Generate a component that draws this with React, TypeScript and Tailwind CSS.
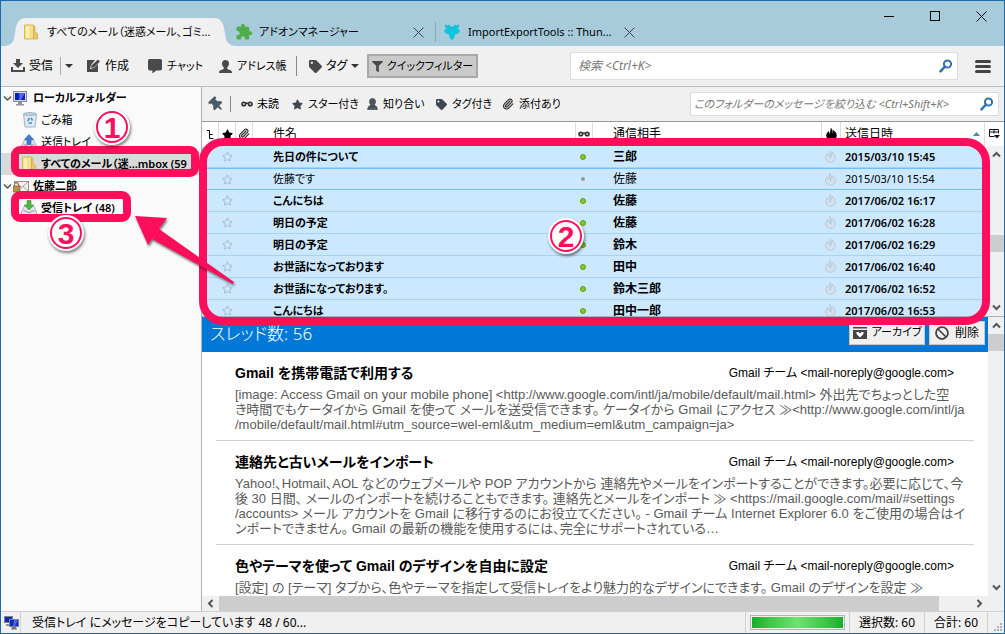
import type { ReactNode } from 'react';
import { Paperclip } from 'lucide-react';
import { FaBan, FaCommentAlt, FaFilter, FaRegStar, FaStar, FaTag, FaThumbtack } from 'react-icons/fa';
import { MdExtension } from 'react-icons/md';

const mails = [
  { subject: '先日の件について', from: '三郎', date: '2015/03/10 15:45', unread: true },
  { subject: '佐藤です', from: '佐藤', date: '2015/03/10 15:54', unread: false },
  { subject: 'こんにちは', from: '佐藤', date: '2017/06/02 16:17', unread: true },
  { subject: '明日の予定', from: '佐藤', date: '2017/06/02 16:28', unread: true },
  { subject: '明日の予定', from: '鈴木', date: '2017/06/02 16:29', unread: true },
  { subject: 'お世話になっております', from: '田中', date: '2017/06/02 16:40', unread: true },
  { subject: 'お世話になっております。', from: '鈴木三郎', date: '2017/06/02 16:52', unread: true },
  { subject: 'こんにちは', from: '田中一郎', date: '2017/06/02 16:53', unread: true },
];

const threads = [
  {
    title: 'Gmail を携帯電話で利用する',
    lines: [
      '[image: Access Gmail on your mobile phone] <http://www.google.com/intl/ja/mobile/default/mail.html> 外出先でちょっとした空',
      'き時間でもケータイから Gmail を使って メールを送受信できます。 ケータイから Gmail にアクセス ≫<http://www.google.com/intl/ja',
      '/mobile/default/mail.html#utm_source=wel-eml&utm_medium=eml&utm_campaign=ja>',
    ],
  },
  {
    title: '連絡先と古いメールをインポート',
    lines: [
      'Yahoo!、Hotmail、AOL などのウェブメールや POP アカウントから 連絡先やメールをインポートすることができます。必要に応じて、今',
      '後 30 日間、 メールのインポートを続けることもできます。 連絡先とメールをインポート ≫ <https://mail.google.com/mail/#settings',
      '/accounts> メール アカウントを Gmail に移行するのにお役立てください。 - Gmail チーム Internet Explorer 6.0 をご使用の場合はイ',
      'ンポートできません。 Gmail の最新の機能を使用するには、完全にサポートされている…',
    ],
  },
  {
    title: '色やテーマを使って Gmail のデザインを自由に設定',
    lines: ['[設定] の [テーマ] タブから、色やテーマを指定して受信トレイをより魅力的なデザインにできます。 Gmail のデザインを設定 ≫'],
  },
];

/* ---------- Iconos ---------- */

const FolderIcon = () => (
  <svg width="16" height="16" viewBox="0 0 16 16" className="shrink-0">
    <path d="M1.500 1h9v14h-9z" fill="#f6e08e" stroke="#d9b85a" />
    <path d="M10.500 1.500l1.500 1v5.500l2.500 1.500v5.500h-4z" fill="#e9c869" stroke="#d0ac4c" strokeWidth=".8" />
    <path d="M3 2.500h3v11h-3z" fill="#fcf0b8" />
  </svg>
);

const DownloadIcon = () => (
  <svg width="14" height="14" viewBox="0 0 14 14" fill="#4a4a4a">
    <path d="M5 0h4v4h3L7 9 2 4h3z" />
    <path d="M0 8h2v3h10V8h2v5H0z" />
  </svg>
);

const WriteIcon = () => (
  <svg width="15" height="14" viewBox="0 0 15 14" fill="#4a4a4a">
    <path d="M1 1h8L5 6 4 10l4-1 4-4v8H1z" />
    <path d="M5 9l.7-2.700L12 .5l2 2-6 6z" />
  </svg>
);

const PersonIcon = () => (
  <svg width="13" height="13" viewBox="0 0 13 13" fill="#4a4a4a">
    <path d="M6.500 0C8.700 0 10 1.500 10 3.500 10 5 9.300 6.500 8.300 7.300V9l3.700 1.500c.7.400 1 1.200 1 2.500H0c0-1.300.3-2.100 1-2.500L4.700 9V7.300C3.700 6.500 3 5 3 3.500 3 1.500 4.300 0 6.500 0z" />
  </svg>
);

/* Silueta con base, para el filtro de contactos */
const ContactIcon = () => (
  <svg width="11" height="12" viewBox="0 0 11 12" fill="#4c5863" stroke="#303a44" strokeWidth=".6">
    <path d="M5.500 .5C7.500 .5 8.500 1.800 8.500 3.500 8.500 4.800 8 5.800 7.500 6.500L8.500 8.500H2.500L3.500 6.500C3 5.800 2.500 4.800 2.500 3.500 2.500 1.800 3.500 .5 5.500 .5z" />
    <path d="M1.500 8.500h8l1 3H.500z" />
  </svg>
);

const SearchIcon = () => (
  <svg width="14" height="14" viewBox="0 0 14 14" fill="none" stroke="#2f72ad" className="shrink-0">
    <circle cx="8.500" cy="5" r="3.600" strokeWidth="2" />
    <path d="M6 7.500L1.500 12.300" strokeWidth="2.500" strokeLinecap="round" />
  </svg>
);

const GlassesIcon = () => (
  <svg width="12" height="6" viewBox="0 0 12 6" fill="#ccc" stroke="#333" strokeWidth="1.600">
    <circle cx="2.800" cy="3" r="1.800" />
    <circle cx="9.200" cy="3" r="1.800" />
    <path d="M4.500 2.500q1.500-1 3 0" />
  </svg>
);

const ClipIcon = ({ className = '' }: { className?: string }) => (
  <Paperclip size={12} strokeWidth={2.5} color="#333" className={className} />
);

const flamePath =
  'M5 .5C6.500 2 6 4 6.200 5.500 7 5 7.500 3.500 7.300 2.500 9.500 4 10.500 6 10.300 8 10 10.700 8 12.300 5.500 12.300S.800 10.700.700 8C.600 6 1.500 4.500 2.500 3.500 2.500 5 3 6 3.800 6.300 4 4.500 5.300 2.500 5 .5z';

const FlameIcon = ({ dark = false }: { dark?: boolean }) => (
  <svg width="11" height="13" viewBox="0 0 11 13" className="mx-auto block">
    <path d={flamePath} fill={dark ? '#000' : '#d3e1ec'} stroke={dark ? '#000' : '#b4c3cf'} strokeWidth=".8" />
    {!dark && <path d="M5.500 5.500v2.500" stroke="#a3b3c1" strokeWidth=".8" />}
  </svg>
);

const ComputerIcon = () => (
  <svg width="14" height="15" viewBox="0 0 14 15">
    <rect x=".5" y=".5" width="13" height="10" fill="#d8dadd" stroke="#858b93" />
    <rect x="2" y="2" width="10" height="7" fill="#0a1fc0" />
    <path d="M6 2h6L8 9H6z" fill="#4a68ee" />
    <path d="M5 11h4v2h2v1.500H3V13h2z" fill="#8e949c" />
  </svg>
);

const TrashIcon = () => (
  <svg width="14" height="16" viewBox="0 0 14 16" className="ml-0.5">
    <path d="M.500 2l1.500 13h10L13.500 2z" fill="#dfe9f1" stroke="#a4b4c2" />
    <ellipse cx="7" cy="2" rx="6.500" ry="1.500" fill="#c3ced8" stroke="#93a3b2" strokeWidth=".7" />
    <path d="M4.700 9l1.800-3M8 6l1.500 2.500M9 11H5.500" stroke="#3f93cf" strokeWidth="1.500" />
  </svg>
);

/* Bandeja con flecha: azul de salida, verde de entrada */
const TrayIcon = ({ out = false }: { out?: boolean }) => (
  <svg width="16" height="16" viewBox="0 0 16 16">
    <path d="M3.500 6h9l3 6v3H.500v-3z" fill="#e4e8ec" stroke="#a5adb5" />
    <path d="M2.500 11h3l1 1.500h3l1-1.500h3" fill="none" stroke="#8b949d" />
    {out ? (
      <path d="M8 .5l4.500 5H10v5H6v-5H3.500z" fill="#3f7bd0" stroke="#2a5ba8" strokeWidth=".6" />
    ) : (
      <path d="M6 .5h4V5h2.700L8 10 3.300 5H6z" fill="#4cb944" stroke="#2f8f2c" strokeWidth=".6" />
    )}
  </svg>
);

const AccountIcon = () => (
  <svg width="16" height="13" viewBox="0 0 16 13">
    <rect x="1.500" y="1.500" width="14" height="10" fill="#f2f2ee" stroke="#8d9296" />
    <path d="M2 2l6.500 5.500L15 2M2 11l5-4.500M15 11l-5-4.500" fill="none" stroke="#9da2a6" />
    <rect x="0" y="6" width="7" height="6" fill="#b4914a" stroke="#806328" strokeWidth=".7" />
    <path d="M1.500 6V4.500a2 2 0 0 1 4 0V6" fill="none" stroke="#8b6d30" />
  </svg>
);

const NetworkIcon = () => (
  <svg width="15" height="14" viewBox="0 0 15 14">
    <rect x=".5" y=".5" width="8" height="6" fill="#1226c8" stroke="#7a828c" />
    <path d="M2 8h4v2H2z" fill="#8d949c" />
    <rect x="5.500" y="3.500" width="9" height="7" fill="#1226c8" stroke="#7a828c" />
    <path d="M10 4h4l-3 6H9z" fill="#4a68ee" />
    <path d="M8 11h4l1 2.500H7z" fill="#6f767e" />
  </svg>
);

const AddonSiteIcon = () => (
  <svg width="16" height="16" viewBox="0 0 16 16" fill="#0fc3de">
    <path d="M1 0l2 1.500L5 .5l1.500 2h3L11 .5l2 1L15 0v3l-1.500 1.500L16 6.500 14.500 9.500l-3 .5L10.500 12v2L8 16l-2.500-2v-2l-1-2-3-.5L0 6.500l2.500-2L1 3z" />
  </svg>
);

const CloseIcon = ({ color = '#444' }: { color?: string }) => (
  <svg width="11" height="11" viewBox="0 0 11 11" stroke={color} fill="none">
    <path d="M.500 .5l10 10M10.500 .5l-10 10" />
  </svg>
);

const Chevron = ({ d, thin = false }: { d: string; thin?: boolean }) => (
  <svg width="9" height="9" viewBox="0 0 9 9" fill="none" stroke="#555" strokeWidth={thin ? 1.5 : 2}>
    <path d={d} />
  </svg>
);

const UP = 'M1 6.500l3.500-3.500 3.500 3.500';
const DOWN = 'M1 2.500l3.500 3.500 3.500-3.500';
const LEFT = 'M6.500 1l-3.500 3.500 3.500 3.500';
const RIGHT = 'M2.500 1l3.500 3.500-3.500 3.500';

const Caret = () => (
  <svg width="8" height="4" viewBox="0 0 8 4" fill="#333">
    <path d="M0 0h8L4 4z" />
  </svg>
);

/* ---------- Barras ---------- */

const TitleBar = () => (
  <header className="flex h-[45px] shrink-0 justify-between bg-[#a8cbdc]">
    <div className="ml-1 flex h-7 items-stretch self-end whitespace-nowrap text-[11px]">
      <div className="flex">
        <svg width="22" height="28" viewBox="0 0 22 28" fill="#f0f0f0">
          <path d="M0 28C8 27 9 22 10 16 11 6 13 0 22 0v28z" />
        </svg>
        <button className="flex w-[186px] items-center gap-2 bg-[#f0f0f0] text-left">
          <span className="-ml-1"><FolderIcon /></span>
          すべてのメール（迷惑メール、ゴミ...
        </button>
        <svg width="22" height="28" viewBox="0 0 22 28" fill="#f0f0f0">
          <path d="M22 28C14 27 13 22 12 16 11 6 9 0 0 0v28z" />
        </svg>
      </div>
      <div className="flex w-[200px] items-center">
        <button className="flex flex-1 items-center gap-1.5">
          <MdExtension size={18} color="#4fae4a" />
          アドオンマネージャー
        </button>
        <button aria-label="タブを閉じる" className="mr-[11px]"><CloseIcon /></button>
      </div>
      <div className="my-1 w-px bg-[#86a5b5]" />
      <div className="flex w-[199px] items-center pl-2">
        <button className="flex flex-1 items-center gap-2">
          <AddonSiteIcon />
          ImportExportTools :: Thun...
        </button>
        <button aria-label="タブを閉じる"><CloseIcon /></button>
      </div>
    </div>
    <div className="flex h-[30px]">
      <button aria-label="最小化" className="grid w-[46px] place-items-center"><span className="h-px w-2.5 bg-black" /></button>
      <button aria-label="最大化" className="grid w-[46px] place-items-center"><span className="size-2.5 border border-black" /></button>
      <button aria-label="閉じる" className="grid w-[46px] place-items-center"><CloseIcon color="#000" /></button>
    </div>
  </header>
);

const SearchBox = ({ label, className }: { label: string; className: string }) => (
  <label className={`flex items-center border border-[#dcdcdc] bg-white pr-1 ${className}`}>
    <input
      type="search"
      aria-label={label}
      placeholder={label}
      className="min-w-0 flex-1 italic outline-none placeholder:text-[#777]"
    />
    <SearchIcon />
  </label>
);

const Toolbar = () => (
  <div className="flex h-[41px] shrink-0 items-center whitespace-nowrap border-b border-[#b9bcc0] pl-2.5 pr-[13px]">
    <button className="flex w-[49px] items-center gap-1"><DownloadIcon />受信</button>
    <div className="h-[18px] w-px bg-[#aaa]" />
    <button aria-label="受信メニュー" className="grid w-[25px] pl-1"><Caret /></button>
    <button className="flex w-[62px] items-center gap-1"><WriteIcon />作成</button>
    <button className="flex w-[71px] items-center gap-[5px] text-[11px]"><FaCommentAlt size={14} color="#4a4a4a" />チャット</button>
    <button className="flex w-[77px] items-center gap-[5px] text-[11px]"><PersonIcon />アドレス帳</button>
    <div className="h-5 w-px bg-[#888]" />
    <button className="ml-3 flex w-[58px] items-center gap-1"><FaTag size={13} color="#4a4a4a" />タグ<Caret /></button>
    <button className="flex h-6 w-[111px] items-center justify-center gap-1 border-2 border-[#a9a9a9] bg-[#cacaca] text-[11px]">
      <FaFilter size={11} color="#4a4a4a" />クイックフィルター
    </button>
    <SearchBox label="検索 <Ctrl+K>" className="ml-auto h-7 w-[388px] pl-[7px]" />
    <button aria-label="メニュー" className="ml-[17px] flex w-4 flex-col gap-[2px]">
      <span className="h-[3px] w-full rounded-sm bg-[#444]" />
      <span className="h-[3px] w-full rounded-sm bg-[#444]" />
      <span className="h-[3px] w-full rounded-sm bg-[#444]" />
    </button>
  </div>
);

type FolderRowProps = { icon: ReactNode; name: string; root?: boolean; bold?: boolean; selected?: boolean };

const FolderRow = ({ icon, name, root, bold, selected }: FolderRowProps) => (
  <li className={`flex h-[22px] items-center whitespace-nowrap ${selected ? 'bg-[#dadada]' : ''} ${bold ? 'font-semibold' : ''}`}>
    {root ? <span className="w-3 shrink-0 pl-0.5"><Chevron d={DOWN} thin /></span> : <span className="w-5 shrink-0" />}
    <span className="flex w-5 shrink-0">{icon}</span>
    {name}
  </li>
);

const FolderPane = () => (
  <aside className="w-[201px] shrink-0 border-r border-[#a5b4c5] bg-[#fafafa] text-[11px]">
    <ul>
      <FolderRow root bold icon={<ComputerIcon />} name="ローカルフォルダー" />
      <FolderRow icon={<TrashIcon />} name="ごみ箱" />
      <FolderRow icon={<TrayIcon out />} name="送信トレイ" />
      <FolderRow bold selected icon={<FolderIcon />} name="すべてのメール（迷...mbox (59" />
      <FolderRow root bold icon={<AccountIcon />} name="佐藤二郎" />
      <FolderRow bold icon={<TrayIcon />} name="受信トレイ (48)" />
    </ul>
  </aside>
);

const FilterBar = () => (
  <div className="flex h-[35px] shrink-0 items-center whitespace-nowrap border-b border-[#999] pl-[7px] pr-[5px] text-[11px]">
    <button aria-label="固定" className="w-[21px]"><FaThumbtack size={15} color="#4c5a66" className="-rotate-45" /></button>
    <div className="h-4 w-px bg-[#888]" />
    <button className="ml-2.5 flex w-[51px] items-center gap-1"><GlassesIcon />未読</button>
    <button className="flex w-[75px] items-center gap-[5px]"><FaStar size={11} color="#3c4752" />スター付き</button>
    <button className="flex w-[69px] items-center gap-[5px]"><ContactIcon />知り合い</button>
    <button className="flex w-[66px] items-center gap-[5px]"><FaTag size={11} color="#3c4752" />タグ付き</button>
    <button className="flex items-center gap-[5px]"><ClipIcon />添付あり</button>
    <SearchBox label="このフォルダーのメッセージを絞り込む <Ctrl+Shift+K>" className="ml-auto h-6 w-[309px] pl-[3px]" />
  </div>
);

/* Barra de desplazamiento vertical con su botón superior e inferior */
const VScroll = ({ before, thumb }: { before: string; thumb: string }) => (
  <div className="flex w-4 flex-1 flex-col items-center bg-[#f0f0f0]">
    <span className="grid h-[17px] place-items-center"><Chevron d={UP} /></span>
    <div className={before} />
    <div className={`w-full bg-[#cdcdcd] ${thumb}`} />
    <span className="mt-auto grid h-[17px] place-items-center"><Chevron d={DOWN} /></span>
  </div>
);

const th = 'h-6 border-r border-[#dedede] p-0 text-left font-normal';

const MessageList = () => (
  <div className="flex h-[195px] shrink-0 overflow-hidden border-b border-[#a5b4c5] bg-white">
    <div className="min-w-0 flex-1">
      <table className="w-full table-fixed border-separate border-spacing-0">
        <colgroup>
          <col className="w-[17px]" />
          <col className="w-[17px]" />
          <col className="w-[17px]" />
          <col />
          <col className="w-[17px]" />
          <col className="w-[229px]" />
          <col className="w-[19px]" />
          <col className="w-[144px]" />
        </colgroup>
        <thead>
          <tr>
            <th className={th} aria-label="スレッド">
              <svg width="7" height="9" viewBox="0 0 7 9" fill="none" stroke="#000" className="mx-auto">
                <path d="M0 .5h2.500v8h4M2.500 4.500h3" />
              </svg>
            </th>
            <th className={th} aria-label="スター"><FaStar size={11} className="mx-auto" /></th>
            <th className={th} aria-label="添付"><ClipIcon className="mx-auto" /></th>
            <th className={`${th} pl-5`}>件名</th>
            <th className={th} aria-label="未読"><span className="flex justify-center"><GlassesIcon /></span></th>
            <th className={`${th} pl-5`}>通信相手</th>
            <th className={th} aria-label="迷惑メール"><FlameIcon dark /></th>
            <th className={`${th} pl-1`}>
              <span className="flex items-center justify-between pr-1">
                送信日時
                <svg width="7" height="4" viewBox="0 0 7 4" fill="#4d86a8"><path d="M3.500 0L7 4H0z" /></svg>
              </span>
            </th>
          </tr>
        </thead>
        <tbody>
          {mails.map((mail, i) => {
            const line = i === 1 ? 'border-y border-[#70c0f8]' : 'border-b border-[#a3d3f8]';
            const td = `h-[22px] p-0 leading-5 bg-[#cce8ff] ${line}`;
            return (
              <tr key={mail.date} className={mail.unread ? 'font-semibold' : ''}>
                <td className={td} />
                <td className={td}><FaRegStar size={11} color="#a9bccb" className="ml-[3px]" /></td>
                <td className={td} />
                <td className={`${td} pl-5 text-[11px]`}>{mail.subject}</td>
                <td className={`${td} pr-[3px]`}>
                  <span
                    className={
                      mail.unread
                        ? 'mx-auto block size-[6px] rounded-full border border-[#5a9f14] bg-[#84c926]'
                        : 'mx-auto block size-1 rounded-full bg-[#999]'
                    }
                  />
                </td>
                <td className={`${td} pl-5`}>{mail.from}</td>
                <td className={`${td} pr-[2px]`}><FlameIcon /></td>
                <td className={`${td} pl-1 text-[11px]`}>{mail.date}</td>
              </tr>
            );
          })}
        </tbody>
      </table>
    </div>
    <div className="flex w-[19px] flex-col items-end">
      <button aria-label="列の選択" className="grid h-6 w-[19px] shrink-0 place-items-center">
        <svg width="11" height="10" viewBox="0 0 11 10" fill="none" stroke="#111">
          <path d="M.500 .5h9v4M.500 .5v7h5M.500 3h9M5 .5v4" />
          <path d="M5 6h6L8 9.500z" fill="#111" stroke="none" />
        </svg>
      </button>
      <VScroll before="h-[72px]" thumb="h-[17px]" />
    </div>
  </div>
);

const ThreadPreview = () => (
  <section className="flex min-h-0 flex-1 flex-col">
    <div className="flex min-h-0 flex-1">
      <div className="min-w-0 flex-1 overflow-hidden bg-white">
        <div className="flex h-[35px] items-center justify-between bg-[#0078d7] pl-2 pr-[3px]">
          <h1 className="text-[17px] font-light text-white">スレッド数: 56</h1>
          <div className="flex items-center gap-1 pb-1 text-[11px]">
            <button className="flex h-6 w-[76px] items-center justify-center gap-[5px] whitespace-nowrap border border-[#c8c8c8] bg-[#f0f0f0]">
              <svg width="14" height="12" viewBox="0 0 14 12" className="shrink-0">
                <path d="M0 0h14v1.500H0zM0 3h14v9H0z" fill="#444" />
                <path d="M3.500 5h2l1.500 1.500L8.500 5h2v2L7 10.500 3.500 7z" fill="#fff" />
              </svg>
              アーカイブ
            </button>
            <button className="flex h-6 w-14 items-center justify-center gap-1.5 border border-[#c8c8c8] bg-[#f0f0f0] text-xs">
              <FaBan size={14} color="#444" />削除
            </button>
          </div>
        </div>
        <div className="px-3.5 font-['Liberation_Sans','Noto_Sans_CJK_JP',sans-serif]">
          {threads.map((thread) => (
            <article key={thread.title} className="whitespace-nowrap border-b border-[#d0d0d0] pb-2 pl-[19px] pr-5 pt-[11px]">
              <div className="flex h-5 items-center justify-between text-black">
                <h2 className="text-sm font-bold">{thread.title}</h2>
                <span className="text-xs">Gmail チーム &lt;mail-noreply@google.com&gt;</span>
              </div>
              <p className="mt-1 text-[13px] leading-[15px] text-[#5a5a5a]">
                {thread.lines.map((line) => (
                  <span key={line} className="block">{line}</span>
                ))}
              </p>
            </article>
          ))}
        </div>
      </div>
      <div className="flex flex-col">
        <VScroll before="h-0" thumb="h-[17px]" />
      </div>
    </div>
    <div className="flex h-[15px] shrink-0 items-center bg-[#f0f0f0] pr-4">
      <span className="grid w-[17px] place-items-center"><Chevron d={LEFT} /></span>
      <div className="h-full flex-1 bg-[#cdcdcd]" />
      <div className="w-8" />
      <span className="grid w-[17px] place-items-center"><Chevron d={RIGHT} /></span>
    </div>
  </section>
);

const StatusBar = () => (
  <footer className="flex h-[22px] shrink-0 items-stretch whitespace-nowrap border-t border-[#d0d0d0]">
    <span className="flex w-5 items-center border-r border-[#d0d0d0] pl-[3px]"><NetworkIcon /></span>
    <span className="flex flex-1 items-center pl-[11px]">受信トレイ にメッセージをコピーしています 48 / 60...</span>
    <span className="flex w-[105px] items-center border-x border-[#d0d0d0] px-1">
      <span
        role="progressbar"
        aria-label="コピーの進行状況"
        className="h-[15px] w-full border border-[#b5b5b5] bg-gradient-to-r from-[#06b025] via-[#70e070] to-[#06b025] bg-clip-content p-px"
      />
    </span>
    <span className="flex w-[75px] items-center justify-center border-r border-[#d0d0d0]">選択数: 60</span>
    <span className="flex w-[63px] items-center justify-center border-r border-[#d0d0d0]">合計: 60</span>
    <span className="flex w-4 items-end justify-end p-0.5">
      <svg width="8" height="8" viewBox="0 0 8 8" fill="#b0b0b0">
        <path d="M6 0h2v2H6zM6 3h2v2H6zM6 6h2v2H6zM3 3h2v2H3zM3 6h2v2H3zM0 6h2v2H0z" />
      </svg>
    </span>
  </footer>
);

/* ---------- Marcas sobre la ventana ---------- */

const StepBadge = ({ n, className }: { n: number; className: string }) => (
  <span className={`absolute grid size-9 place-items-center rounded-full bg-white shadow-[1px_2px_3px_rgba(0,0,0,0.5)] ${className}`}>
    <span className="grid size-8 place-items-center rounded-full border-2 border-[#ff0f5b] font-['Liberation_Sans',sans-serif] text-[30px] leading-none font-bold text-[#ff0f5b]">
      {n}
    </span>
  </span>
);

const Annotations = () => (
  <div className="pointer-events-none absolute inset-0">
    <div className="absolute left-[10px] top-[145px] h-[31px] w-[188px] rounded-[9px] border-8 border-[#ff0f5b]" />
    <div className="absolute left-[10px] top-[190px] h-[31px] w-[120px] rounded-[9px] border-8 border-[#ff0f5b]" />
    <div className="absolute left-[198px] right-[14px] top-[137px] h-[187px] rounded-3xl border-8 border-[#ff0f5b]" />
    <svg width="104" height="74" viewBox="0 0 104 74" className="absolute left-[132px] top-[213px] drop-shadow-[1px_2px_1px_rgba(0,0,0,0.5)]">
      <path d="M2 2L34 4L26 15L101 68L100 70L19 25L15 31z" fill="#ff0f5b" />
    </svg>
    <StepBadge n={1} className="left-[93px] top-[108px]" />
    <StepBadge n={2} className="left-[547px] top-[217px]" />
    <StepBadge n={3} className="left-[47px] top-[214px]" />
  </div>
);

export default function App() {
  return (
    <div className="relative flex h-screen flex-col overflow-hidden border border-[#1b6aa9] bg-[#f0f0f0] font-['Noto_Sans','Noto_Sans_CJK_JP',sans-serif] text-xs text-black [font-feature-settings:'palt']">
      <TitleBar />
      <Toolbar />
      <div className="flex min-h-0 flex-1">
        <FolderPane />
        <main className="flex min-w-0 flex-1 flex-col">
          <FilterBar />
          <MessageList />
          <ThreadPreview />
        </main>
      </div>
      <StatusBar />
      <Annotations />
    </div>
  );
}
